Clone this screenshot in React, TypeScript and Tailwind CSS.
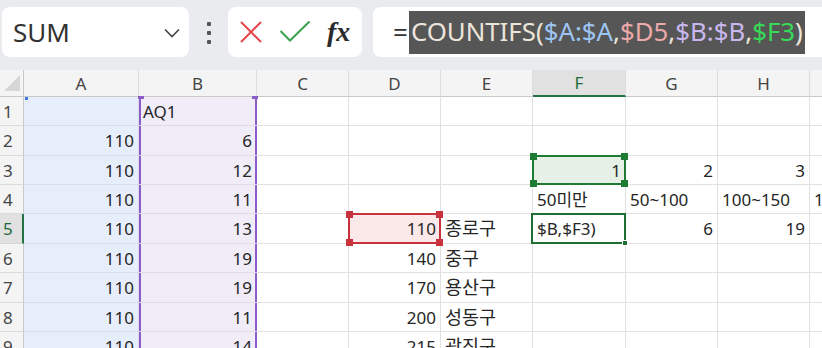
import React from "react";

const colWidths = "grid-cols-[24px_115px_118px_92px_92px_92px_93px_92px_92px_1fr]";
const rowHeights = "grid-rows-[27px_29px_30px_29px_29px_30px_29px_30px_29px_30px]";

const letters = ["A", "B", "C", "D", "E", "F", "G", "H", "I"];

type Cell = { v: string; left?: boolean; ko?: boolean };
type Row = Record<string, Cell>;

const n = (v: string): Cell => ({ v });
const t = (v: string): Cell => ({ v, left: true });
const k = (v: string): Cell => ({ v, left: true, ko: true });

const rows: Row[] = [
  { B: t("AQ1") },
  { A: n("110"), B: n("6") },
  { A: n("110"), B: n("12"), F: n("1"), G: n("2"), H: n("3") },
  { A: n("110"), B: n("11"), F: t("50미만"), G: t("50~100"), H: t("100~150"), I: t("150~200") },
  { A: n("110"), B: n("13"), D: n("110"), E: k("종로구"), F: t("$B,$F3)"), G: n("6"), H: n("19") },
  { A: n("110"), B: n("19"), D: n("140"), E: k("중구") },
  { A: n("110"), B: n("19"), D: n("170"), E: k("용산구") },
  { A: n("110"), B: n("11"), D: n("200"), E: k("성동구") },
  { A: n("110"), B: n("14"), D: n("215"), E: k("광진구") },
];

function Handles({ color }: { color: string }) {
  return (
    <>
      <span className={`absolute -left-[4px] -top-[4px] h-[7px] w-[7px] ${color}`} />
      <span className={`absolute -right-[4px] -top-[4px] h-[7px] w-[7px] ${color}`} />
      <span className={`absolute -left-[4px] -bottom-[4px] h-[7px] w-[7px] ${color}`} />
      <span className={`absolute -right-[4px] -bottom-[4px] h-[7px] w-[7px] ${color}`} />
    </>
  );
}

function GridCell({ col, row }: { col: string; row: number }) {
  const cell = rows[row - 1][col];
  let bg = "bg-white";
  let line = "border-[#e1e1e1]";
  if (col === "A") {
    bg = "bg-[#e7eefb]";
    line = "border-[#d9dfe9]";
  }
  if (col === "B") {
    bg = "bg-[#f0edf9]";
    line = "border-[#dedbe8]";
  }
  if (col === "D" && row === 5) bg = "bg-[#fbe9ea]";
  if (col === "F" && row === 3) bg = "bg-[#e6f0e7]";

  return (
    <div className={`relative flex items-center border-r border-b px-[4px] ${line} ${bg} ${cell && !cell.left ? "justify-end" : "justify-start"}`}>
      {cell && (
        <span
          className={`relative z-20 whitespace-nowrap leading-none text-[#262626] ${
            cell.ko ? "text-[18.5px]" : "text-[17px]"
          }`}
        >
          {cell.v}
        </span>
      )}

      {col === "A" && row === 1 && <span className="absolute left-[1px] top-0 h-[3px] w-[3px] bg-[#3b7be0]" />}

      {col === "B" && (
        <>
          <span className="absolute inset-y-0 left-0 z-10 w-[2px] bg-[#8c5dc8]" />
          <span className="absolute inset-y-0 right-[-1px] z-10 w-[2px] bg-[#8c5dc8]" />
          {row === 1 && (
            <>
              <span className="absolute -left-[1px] -top-[1px] z-10 h-[3px] w-[6px] bg-[#8c5dc8]" />
              <span className="absolute -right-[2px] -top-[1px] z-10 h-[3px] w-[6px] bg-[#8c5dc8]" />
            </>
          )}
        </>
      )}

      {col === "D" && row === 5 && (
        <div className="absolute -left-[1px] -top-[1px] -right-[1px] -bottom-[1px] z-10 border-2 border-[#c9323d]">
          <Handles color="bg-[#c9323d]" />
        </div>
      )}

      {col === "F" && row === 3 && (
        <div className="absolute -left-[1px] -top-[1px] -right-[1px] -bottom-[1px] z-10 border-2 border-[#1e7b34]">
          <Handles color="bg-[#1e7b34]" />
        </div>
      )}

      {col === "F" && row === 5 && (
        <div className="absolute -left-[2px] -top-[1px] -right-[1px] -bottom-[1px] z-10 border-2 border-[#1f6e34]">
          <span className="absolute -right-[4px] -bottom-[4px] h-[6px] w-[6px] border border-white bg-[#1f6e34]" />
        </div>
      )}
    </div>
  );
}

function FormulaBar() {
  return (
    <div className="flex h-[70px] items-start bg-[#e9ebef] pt-[7px]">
      <div className="ml-[2px] flex h-[50px] w-[187px] items-center justify-between rounded-lg bg-white pl-[11px] pr-[8px]">
        <span className="text-[26px] leading-none text-[#333]">SUM</span>
        <svg width="18" height="12" viewBox="0 0 18 12" className="mt-[2px]">
          <path d="M2 2.5 L9 9.5 L16 2.5" fill="none" stroke="#444" strokeWidth="1.6" />
        </svg>
      </div>
      <div className="flex w-[39px] flex-col items-center gap-[5px] pt-[15px]">
        <span className="h-[4px] w-[4px] rounded-[1px] bg-[#555]" />
        <span className="h-[4px] w-[4px] rounded-[1px] bg-[#555]" />
        <span className="h-[4px] w-[4px] rounded-[1px] bg-[#555]" />
      </div>
      <div className="flex h-[50px] w-[134px] items-center rounded-lg bg-white pl-[11px]">
        <svg width="24" height="24" viewBox="0 0 24 24">
          <path d="M2 2 L22 22 M22 2 L2 22" stroke="#e5484d" strokeWidth="2" />
        </svg>
        <svg width="32" height="24" viewBox="0 0 32 24" className="ml-[16px]">
          <path d="M1.5 11 L11 20.5 L30.5 1.5" fill="none" stroke="#3aa34b" strokeWidth="2" />
        </svg>
        <span className="ml-[16px] font-['Liberation_Serif',serif] text-[28px] font-bold italic leading-none text-[#2b2b2b]">fx</span>
      </div>
      <div className="ml-[11px] flex h-[50px] flex-1 items-center rounded-l-lg bg-white pl-[20px]">
        <span className="text-[26px] leading-none text-[#333]">=</span>
        <span className="ml-[1px] flex h-[43px] items-center bg-[#565656] px-[2px] text-[25.8px] leading-none whitespace-nowrap">
          <span className="text-[#ece5da]">COUNTIFS(</span>
          <span className="text-[#9ec6f4]">$A:$A</span>
          <span className="text-[#ece5da]">,</span>
          <span className="text-[#eba9aa]">$D5</span>
          <span className="text-[#ece5da]">,</span>
          <span className="text-[#c9b8ee]">$B:$B</span>
          <span className="text-[#ece5da]">,</span>
          <span className="text-[#38db58]">$F3</span>
          <span className="text-[#ece5da]">)</span>
        </span>
      </div>
    </div>
  );
}

export default function App() {
  return (
    <div className="h-[348px] w-[822px] overflow-hidden bg-white font-['Noto_Sans','Noto_Sans_CJK_KR',sans-serif]">
      <FormulaBar />
      <div className={`grid ${colWidths} ${rowHeights}`}>
        <div className="relative border-r border-b border-[#c9c9c9] bg-[#f4f4f4]">
          <svg width="16" height="16" viewBox="0 0 16 16" className="absolute left-[4px] top-[5px]">
            <polygon points="16,0 16,16 0,16" fill="#d6d6d6" />
          </svg>
        </div>
        {letters.map((l) => (
          <div
            key={l}
            className={`flex items-center justify-center border-r border-[#dcdcdc] text-[17px] leading-none ${
              l === "F"
                ? "border-b-2 border-b-[#217346] bg-[#e1e1e1] text-[#1f6b3a]"
                : "border-b border-b-[#c9c9c9] bg-[#f4f4f4] text-[#444]"
            }`}
          >
            {l}
          </div>
        ))}
        {rows.map((_, i) => {
          const r = i + 1;
          return (
            <React.Fragment key={r}>
              <div
                className={`flex items-center pl-[3px] text-[17px] leading-none ${
                  r === 5
                    ? "border-r-2 border-b border-r-[#217346] border-b-[#d6d6d6] bg-[#e1e1e1] text-[#1f6b3a]"
                    : "border-r border-b border-r-[#c9c9c9] border-b-[#dcdcdc] bg-[#f4f4f4] text-[#444]"
                }`}
              >
                {r}
              </div>
              {letters.map((l) => (
                <GridCell key={l} col={l} row={r} />
              ))}
            </React.Fragment>
          );
        })}
      </div>
    </div>
  );
}
